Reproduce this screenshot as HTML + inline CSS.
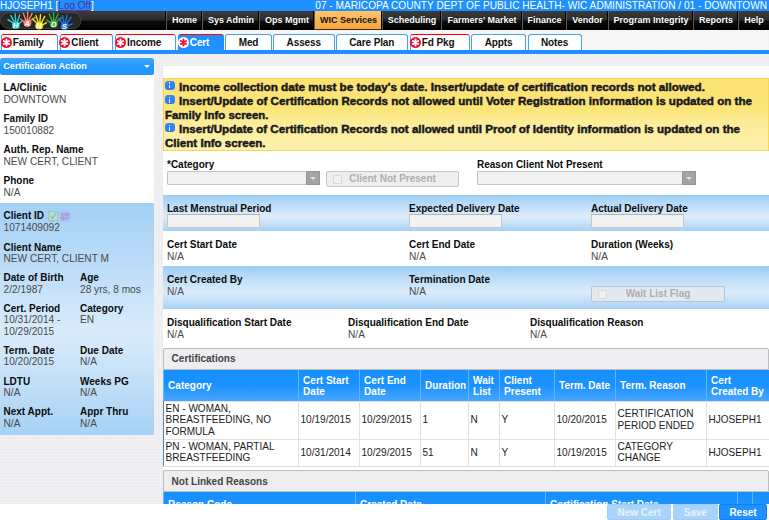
<!DOCTYPE html>
<html><head><meta charset="utf-8">
<style>
*{box-sizing:border-box;margin:0;padding:0}
html,body{width:769px;height:520px;overflow:hidden}
body{font-family:"Liberation Sans",sans-serif;font-size:10px;color:#222;position:relative;
 background-color:#ececee;
 background-image:radial-gradient(circle at 1.5px 1.5px,#f3f3f5 0.7px,rgba(243,243,245,0) 1.3px);background-size:3px 3px;}
.abs{position:absolute}
svg{display:block}
#topbar{left:0;top:0;width:769px;height:11px;background:#1e90ff;color:#fff;font-size:10.13px;line-height:11px;white-space:nowrap}
#topbar .l{position:absolute;left:0;top:0;font-size:10px}
#topbar .r{position:absolute;right:2px;top:0}
#topbar a{color:#5b2d9b;text-decoration:underline}
#menubar{left:0;top:11px;width:769px;height:19px;background:linear-gradient(#3c3c3c 0,#2c2c2c 47%,#0c0c0c 53%,#000 100%)}
.mi{position:absolute;top:0;height:19px;color:#fff;font-weight:bold;font-size:9px;line-height:19px;text-align:center;white-space:nowrap;border-left:1px solid #5a5a5a;box-shadow:-1px 0 0 #000;text-shadow:0 0 1px #000}
.mi.on{background:linear-gradient(#ffc36a,#f8a640);color:#111;text-shadow:none;border-bottom:1px solid #3a2a10}
#tabrow{left:0;top:30px;width:769px;height:20px;background:rgba(255,255,255,0.45)}
#blueline{left:0;top:50px;width:769px;height:4px;background:#1e90ff}
.tab{position:absolute;top:34px;height:16px;background:#fff;border:1.5px solid #48a0f6;border-bottom:none;border-radius:3px 3px 0 0;font-weight:bold;font-size:10px;letter-spacing:-0.12px;line-height:15px;color:#111;text-align:center;white-space:nowrap}
.tab.req{border-top:1.7px solid #f00;text-align:left;padding-left:10.8px}
.tab.act{background:#1e90ff;color:#fff;border-color:#1e90ff;border-top-color:#f00}
.tab svg{position:absolute;left:-1.2px;top:1.6px}
#logo{left:0;top:12px}
#sbhead{left:0;top:58px;width:154px;height:17px;background:linear-gradient(#3ba4ff,#2498ff 55%,#2094ff);border-radius:2.5px;color:#fff;font-weight:bold;font-size:9.1px;line-height:16px;padding-left:3.3px;white-space:nowrap}
#sbhead:after{content:"";position:absolute;left:144.3px;top:6.8px;border:3.1px solid transparent;border-top:3.4px solid #fff;border-bottom:none}
#sbw{left:0;top:75px;width:154px;height:128px;background:#fff}
#sbb{left:0;top:203px;width:154px;height:232px;background:linear-gradient(#a3d0f4 0,#b9dbf7 25%,#d9ebfb 55%,#d4e8fa 62%,#a6d2f5 100%)}
.t{position:absolute;white-space:nowrap;line-height:12px;font-size:10px}
.b{font-weight:bold;color:#0c0c0c}
.v{color:#4a4a4a;font-size:10.15px}
#main{left:163px;top:66px;width:606px;height:437px;background:#fff}
#msg{left:163px;top:78.3px;width:605.5px;height:72.4px;border:1px solid #f7d752;background:linear-gradient(#fbe273 0,#fbe577 42%,#fcec98 60%,#fdf1ae 100%)}
.m{position:absolute;white-space:nowrap;font-weight:bold;font-size:10px;line-height:14px;color:#1a1a1a;transform-origin:0 50%;transform:scaleX(1.17);-webkit-text-stroke:0.42px #141420}
.info{position:absolute;width:9.5px;height:9.3px;border-radius:3.2px;background:linear-gradient(#3386fa,#2a7bf6)}
.info:before{content:"";position:absolute;left:4.1px;top:1.7px;width:1.3px;height:1.4px;background:#fff6c8}
.info:after{content:"";position:absolute;left:4.1px;top:3.9px;width:1.3px;height:3.8px;background:#fff6c8}
.sel{position:absolute;height:14px;background:#f1f1f1;border:1px solid #c4c4c4;border-radius:1px}
.sel i{position:absolute;right:-1px;top:-1px;width:14px;height:14px;background:#a3a3a3;border:1px solid #969696}
.sel i:after{content:"";position:absolute;left:3px;top:5px;border:3px solid transparent;border-top:3.5px solid #e8e8e8;border-bottom:none}
.inp{position:absolute;height:14px;background:#f2f2f2;border:1px solid #c8c8c8;border-top-color:#b5b5b5;border-radius:1px}
.dbtn{position:absolute;height:16px;background:#eeeeee;border:1px solid #c6c6c6;border-radius:2px;color:#aeaeae;font-weight:bold;font-size:10px;line-height:14px;text-align:center;white-space:nowrap}
.dbtn u{position:absolute;left:6px;top:3px;width:9px;height:9px;border:1px solid #d8d8d8;background:#f1f1f1;border-radius:1px}
.row{position:absolute;left:163px;width:606px;background:linear-gradient(#9ccdf4 0,#b5d9f7 22%,#dcecfb 60%,#d2e7fa 70%,#a6d2f5 100%)}
.ph{position:absolute;left:163px;width:606px;height:22px;background:#eeeef1;border:1px solid #bdbdbd;border-radius:2px 2px 0 0;font-weight:bold;font-size:10px;line-height:20.7px;color:#444;padding-left:7.6px}
.th{position:absolute;background:linear-gradient(#1690ff 0,#1a92ff 50%,#48a6ff 100%);color:#fff;font-weight:bold;font-size:10px;line-height:11px;border-left:1px solid #63b3ff;padding-left:4.1px;white-space:nowrap;display:flex;align-items:center}
.td{position:absolute;background:#fff;border-left:1px solid #e2e2e2;border-top:1px solid #e2e2e2;font-size:10.05px;line-height:11.5px;color:#222;padding-left:1.5px;padding-bottom:1.4px;display:flex;align-items:center}
#foot{left:0;top:503.5px;width:769px;height:17px;background:#fff}
.fb{position:absolute;top:504.4px;height:15.6px;border-radius:2px;color:#fff;font-weight:bold;font-size:10px;line-height:15px;text-align:center}
</style></head><body>
<svg width="0" height="0" style="position:absolute">
<defs>
<symbol id="rq" viewBox="0 0 10 10"><circle cx="5" cy="5" r="5" fill="#ee1133"/><g stroke="#fff" stroke-width="1.7" stroke-linecap="round"><path d="M5 2.2V7.8M2.6 3.6L7.4 6.4M2.6 6.4L7.4 3.6"/></g></symbol>
<symbol id="rqw" viewBox="0 0 10 10"><circle cx="5" cy="5" r="5" fill="#fff"/><g stroke="#ee1133" stroke-width="1.7" stroke-linecap="round"><path d="M5 2.2V7.8M2.6 3.6L7.4 6.4M2.6 6.4L7.4 3.6"/></g></symbol>
<symbol id="hand" overflow="visible"><ellipse cx="0" cy="0.2" rx="3.9" ry="3.7" fill="currentColor"/><g stroke="currentColor" stroke-width="1.4" stroke-linecap="round" fill="none"><path d="M-2.2 -2.2L-7 -6.4M-1 -3L-3.6 -10M0.5 -3.2L0.9 -11M2 -2.6L5.2 -9.4M3 -0.5L7.2 -3.2"/></g></symbol>
</defs></svg>
<div id="topbar" class="abs"><span class="l">HJOSEPH1 [<a>Log Off</a>]</span><span class="r">07 - MARICOPA COUNTY DEPT OF PUBLIC HEALTH- WIC ADMINISTRATION / 01 - DOWNTOWN</span></div>
<div id="menubar" class="abs">
<div class="mi" style="left:166px;width:36px">Home</div>
<div class="mi" style="left:202px;width:57px">Sys Admin</div>
<div class="mi" style="left:259px;width:55px">Ops Mgmt</div>
<div class="mi on" style="left:314px;width:68px">WIC Services</div>
<div class="mi" style="left:382px;width:59px">Scheduling</div>
<div class="mi" style="left:441px;width:81px">Farmers' Market</div>
<div class="mi" style="left:522px;width:44px">Finance</div>
<div class="mi" style="left:566px;width:42px">Vendor</div>
<div class="mi" style="left:608px;width:85px">Program Integrity</div>
<div class="mi" style="left:693px;width:45px">Reports</div>
<div class="mi" style="left:738px;width:31px">Help</div>
</div>
<div id="tabrow" class="abs"></div>
<svg id="logo" class="abs" width="84" height="19" viewBox="0 0 84 19" style="overflow:visible">
<rect x="0.5" y="0.8" width="80.5" height="15.8" rx="7.9" fill="#262626" stroke="#4c4c4c" stroke-width="0.8"/>
<g transform="translate(15.8,13) rotate(-8)" color="#2ed3d0"><use href="#hand"/></g>
<g transform="translate(27.5,11) scale(-1,1) rotate(-6)" color="#f5836c"><use href="#hand"/></g>
<g transform="translate(39.2,13.6) rotate(2)" color="#f6e41c"><use href="#hand"/></g>
<g transform="translate(53.8,11.8) scale(-1,1) rotate(-4)" color="#3cab3a"><use href="#hand"/></g>
<g transform="translate(64.6,14) rotate(8)" color="#1d74e0"><use href="#hand"/></g>
<g fill="#fff" font-family="Liberation Sans" font-weight="bold" font-style="italic" font-size="7.6" text-anchor="middle">
<text x="15.6" y="15.8">H</text><text x="27.3" y="13.8">A</text><text x="39" y="16.4">N</text><text x="53.8" y="14.6">D</text><text x="64.4" y="16.8">S</text></g>
</svg>
<div class="tab req" style="left:1px;width:56.5px"><svg width="11" height="11"><use href="#rq"/></svg>Family</div>
<div class="tab req" style="left:59.5px;width:53.5px"><svg width="11" height="11"><use href="#rq"/></svg>Client</div>
<div class="tab req" style="left:115.2px;width:60.4px"><svg width="11" height="11"><use href="#rq"/></svg>Income</div>
<div class="tab req act" style="left:178px;width:46px"><svg width="11" height="11"><use href="#rqw"/></svg>Cert</div>
<div class="tab" style="left:225px;width:47px">Med</div>
<div class="tab" style="left:273px;width:61.5px">Assess</div>
<div class="tab" style="left:335.5px;width:72.5px">Care Plan</div>
<div class="tab req" style="left:410px;width:60px"><svg width="11" height="11"><use href="#rq"/></svg>Fd Pkg</div>
<div class="tab" style="left:471px;width:55px">Appts</div>
<div class="tab" style="left:527.5px;width:54px">Notes</div>
<div id="blueline" class="abs"></div>
<div id="sbhead" class="abs">Certification Action</div>
<div id="sbw" class="abs"></div>
<div id="sbb" class="abs"></div>
<div class="t b" style="left:3.5px;top:82px">LA/Clinic</div>
<div class="t v" style="left:3.5px;top:94px">DOWNTOWN</div>
<div class="t b" style="left:3.5px;top:113px">Family ID</div>
<div class="t v" style="left:3.5px;top:125px">150010882</div>
<div class="t b" style="left:3.5px;top:144px">Auth. Rep. Name</div>
<div class="t v" style="left:3.5px;top:155.5px">NEW CERT, CLIENT</div>
<div class="t b" style="left:3.5px;top:175px">Phone</div>
<div class="t v" style="left:3.5px;top:186.5px">N/A</div>
<div class="t b" style="left:3.5px;top:210px">Client ID</div>
<div class="t v" style="left:3.5px;top:222px">1071409092</div>
<div class="t b" style="left:3.5px;top:242px">Client Name</div>
<div class="t v" style="left:3.5px;top:253px">NEW CERT, CLIENT M</div>
<div class="t b" style="left:3.5px;top:272px">Date of Birth</div>
<div class="t b" style="left:80px;top:272px">Age</div>
<div class="t v" style="left:3.5px;top:284px">2/2/1987</div>
<div class="t v" style="left:80px;top:284px">28 yrs, 8 mos</div>
<div class="t b" style="left:3.5px;top:303px">Cert. Period</div>
<div class="t b" style="left:80px;top:303px">Category</div>
<div class="t v" style="left:3.5px;top:314px">10/31/2014 -</div>
<div class="t v" style="left:80px;top:314px">EN</div>
<div class="t v" style="left:3.5px;top:326px">10/29/2015</div>
<div class="t b" style="left:3.5px;top:345px">Term. Date</div>
<div class="t b" style="left:80px;top:345px">Due Date</div>
<div class="t v" style="left:3.5px;top:356.4px">10/20/2015</div>
<div class="t v" style="left:80px;top:356.4px">N/A</div>
<div class="t b" style="left:3.5px;top:376px">LDTU</div>
<div class="t b" style="left:80px;top:376px">Weeks PG</div>
<div class="t v" style="left:3.5px;top:387.2px">N/A</div>
<div class="t v" style="left:80px;top:387.2px">N/A</div>
<div class="t b" style="left:3.5px;top:406px">Next Appt.</div>
<div class="t b" style="left:80px;top:406px">Appr Thru</div>
<div class="t v" style="left:3.5px;top:418px">N/A</div>
<div class="t v" style="left:80px;top:418px">N/A</div>
<svg class="abs" style="left:47.5px;top:210.5px" width="23" height="11" viewBox="0 0 23 11">
<rect x="0.6" y="0.6" width="9.2" height="9.2" rx="1.2" fill="#b8e2cc" stroke="#9cc6c8" stroke-width="1.4"/>
<path d="M2.4 4.6L4.6 7.4L8 2.2" fill="none" stroke="#8fb4cc" stroke-width="1.3"/>
<rect x="12" y="0.4" width="10.2" height="9.8" rx="1.6" fill="#b9b2f8"/>
<path d="M13.2 3.5H20M18.4 1.9L20.6 3.5L18.4 5.1M21 7.2H14.2M15.8 5.6L13.6 7.2L15.8 8.8" fill="none" stroke="#8da9cc" stroke-width="1.3"/>
</svg>
<div id="main" class="abs"></div>
<div id="msg" class="abs"></div>
<div class="m" style="left:179px;top:80.6px;transform:scaleX(1.1697)">Income collection date must be today's date. Insert/update of certification records not allowed.</div>
<div class="m" style="left:179px;top:95px;transform:scaleX(1.1605)">Insert/Update of Certification Records not allowed until Voter Registration information is updated on the</div>
<div class="m" style="left:164.5px;top:108.8px;transform:scaleX(1.142)">Family Info screen.</div>
<div class="m" style="left:179px;top:123px;transform:scaleX(1.158)">Insert/Update of Certification Records not allowed until Proof of Identity information is updated on the</div>
<div class="m" style="left:164.5px;top:137.1px;transform:scaleX(1.159)">Client Info screen.</div>
<div class="info" style="left:165px;top:80.7px"></div>
<div class="info" style="left:165px;top:95px"></div>
<div class="info" style="left:165px;top:122.9px"></div>
<div class="t b" style="left:167px;top:159px">*Category</div>
<div class="t b" style="left:477px;top:159px">Reason Client Not Present</div>
<div class="sel" style="left:167px;top:171px;width:153px"><i></i></div>
<div class="sel" style="left:477px;top:171px;width:219px"><i></i></div>
<div class="dbtn" style="left:326px;top:171px;width:133px"><u></u>Client Not Present</div>
<div class="row" style="top:194.5px;height:36.5px"></div>
<div class="row" style="top:266px;height:43px"></div>
<div class="t b" style="left:167px;top:203px">Last Menstrual Period</div>
<div class="t b" style="left:409px;top:203px">Expected Delivery Date</div>
<div class="t b" style="left:591px;top:203px">Actual Delivery Date</div>
<div class="inp" style="left:167px;top:214px;width:93px"></div>
<div class="inp" style="left:409px;top:214px;width:93px"></div>
<div class="inp" style="left:591px;top:214px;width:93px"></div>
<div class="t b" style="left:167px;top:239px">Cert Start Date</div>
<div class="t v" style="left:167px;top:251px">N/A</div>
<div class="t b" style="left:409px;top:239px">Cert End Date</div>
<div class="t v" style="left:409px;top:251px">N/A</div>
<div class="t b" style="left:591px;top:239px">Duration (Weeks)</div>
<div class="t v" style="left:591px;top:251px">N/A</div>
<div class="t b" style="left:167px;top:274px">Cert Created By</div>
<div class="t v" style="left:167px;top:286px">N/A</div>
<div class="t b" style="left:409px;top:274px">Termination Date</div>
<div class="t v" style="left:409px;top:286px">N/A</div>
<div class="dbtn" style="left:591px;top:286px;width:134px;background:#e2e9ef;border-color:#b9c4cf"><u></u>Wait List Flag</div>
<div class="t b" style="left:167px;top:317px">Disqualification Start Date</div>
<div class="t v" style="left:167px;top:329px">N/A</div>
<div class="t b" style="left:348px;top:317px">Disqualification End Date</div>
<div class="t v" style="left:348px;top:329px">N/A</div>
<div class="t b" style="left:530px;top:317px">Disqualification Reason</div>
<div class="t v" style="left:530px;top:329px">N/A</div>
<div class="ph" style="top:348px">Certifications</div>
<div class="th" style="left:163px;top:370px;width:135px;height:31px"><span>Category</span></div>
<div class="th" style="left:298px;top:370px;width:61px;height:31px"><span>Cert Start<br>Date</span></div>
<div class="th" style="left:359px;top:370px;width:61px;height:31px"><span>Cert End<br>Date</span></div>
<div class="th" style="left:420px;top:370px;width:48px;height:31px"><span>Duration</span></div>
<div class="th" style="left:468px;top:370px;width:31px;height:31px"><span>Wait<br>List</span></div>
<div class="th" style="left:499px;top:370px;width:55px;height:31px"><span>Client<br>Present</span></div>
<div class="th" style="left:554px;top:370px;width:61px;height:31px"><span>Term. Date</span></div>
<div class="th" style="left:615px;top:370px;width:91px;height:31px"><span>Term. Reason</span></div>
<div class="th" style="left:706px;top:370px;width:63px;height:31px"><span>Cert<br>Created By</span></div>
<div class="td" style="left:163px;top:401px;width:135px;height:38px"><span>EN - WOMAN,<br>BREASTFEEDING, NO<br>FORMULA</span></div>
<div class="td" style="left:298px;top:401px;width:61px;height:38px"><span>10/19/2015</span></div>
<div class="td" style="left:359px;top:401px;width:61px;height:38px"><span>10/29/2015</span></div>
<div class="td" style="left:420px;top:401px;width:48px;height:38px"><span>1</span></div>
<div class="td" style="left:468px;top:401px;width:31px;height:38px"><span>N</span></div>
<div class="td" style="left:499px;top:401px;width:55px;height:38px"><span>Y</span></div>
<div class="td" style="left:554px;top:401px;width:61px;height:38px"><span>10/20/2015</span></div>
<div class="td" style="left:615px;top:401px;width:91px;height:38px"><span>CERTIFICATION<br>PERIOD ENDED</span></div>
<div class="td" style="left:706px;top:401px;width:63px;height:38px"><span>HJOSEPH1</span></div>
<div class="td" style="left:163px;top:439px;width:135px;height:27px"><span>PN - WOMAN, PARTIAL<br>BREASTFEEDING</span></div>
<div class="td" style="left:298px;top:439px;width:61px;height:27px"><span>10/31/2014</span></div>
<div class="td" style="left:359px;top:439px;width:61px;height:27px"><span>10/29/2015</span></div>
<div class="td" style="left:420px;top:439px;width:48px;height:27px"><span>51</span></div>
<div class="td" style="left:468px;top:439px;width:31px;height:27px"><span>N</span></div>
<div class="td" style="left:499px;top:439px;width:55px;height:27px"><span>Y</span></div>
<div class="td" style="left:554px;top:439px;width:61px;height:27px"><span>10/19/2015</span></div>
<div class="td" style="left:615px;top:439px;width:91px;height:27px"><span>CATEGORY<br>CHANGE</span></div>
<div class="td" style="left:706px;top:439px;width:63px;height:27px"><span>HJOSEPH1</span></div>
<div class="abs" style="left:163px;top:401px;width:1px;height:65px;background:#5b7fae"></div>
<div class="abs" style="left:163px;top:466px;width:606px;height:1px;background:#dcdcdc"></div>
<div class="ph" style="top:470px;height:22.4px;line-height:22px">Not Linked Reasons</div>
<div class="th" style="left:163px;top:492.3px;width:192px;height:22px;align-items:flex-start;padding-top:6.3px"><span>Reason Code</span></div>
<div class="th" style="left:355px;top:492.3px;width:190px;height:22px;align-items:flex-start;padding-top:6.3px"><span>Created Date</span></div>
<div class="th" style="left:545px;top:492.3px;width:192px;height:22px;align-items:flex-start;padding-top:6.3px"><span>Certification Start Date</span></div>
<div class="th" style="left:737px;top:492.3px;width:15px;height:22px;align-items:flex-start;padding-top:6.3px"><span></span></div>
<div class="th" style="left:752px;top:492.3px;width:17px;height:22px;align-items:flex-start;padding-top:6.3px"><span></span></div>
<div id="foot" class="abs"></div>
<div class="fb" style="left:606.7px;width:64.8px;background:#a9d4fa;border:1px solid #9fcdf8;color:#e6f1fc">New Cert</div>
<div class="fb" style="left:673px;width:45px;background:#a9d4fa;border:1px solid #9fcdf8;color:#e6f1fc">Save</div>
<div class="fb" style="left:719px;width:48px;background:#1e90ff;border:1px solid #1a7fe0">Reset</div>
</body></html>
